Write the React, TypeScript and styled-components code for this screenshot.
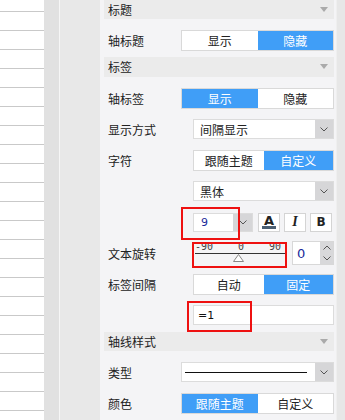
import React from "react";
import styled, { createGlobalStyle } from "styled-components";

const GlobalStyle = createGlobalStyle`
  html, body {
    margin: 0;
    padding: 0;
    background: #f4f4f6;
  }
  body {
    font-family: "Noto Sans CJK SC", "Noto Sans", sans-serif;
    font-size: 12px;
    color: #222;
  }
`;

const Page = styled.div`
  display: flex;
  width: 345px;
  height: 420px;
  overflow: hidden;
`;

const ListColumn = styled.div`
  width: 44px;
  flex: none;
  background: repeating-linear-gradient(
    to bottom,
    #fff 0 11px,
    #c9c9c9 11px 12px,
    #fff 12px 19px
  );
`;

const Gutter = styled.div`
  width: 15px;
  flex: none;
  background: #e1e1e1;
  border-right: 1px solid #f6f6f6;
`;

const Spacer = styled.div`
  width: 40px;
  flex: none;
  background: #e8e8e8;
`;

const Panel = styled.div`
  flex: 1;
  background: #f4f4f6;
  padding: 0 2px 0 4px;
  display: flex;
  flex-direction: column;
`;

const ScrollTrack = styled.div`
  width: 8px;
  flex: none;
  background: #e7e7e7;
  border-left: 1px solid #efefef;
`;

const Header = styled.div`
  height: 23px;
  background: #ebebeb;
  display: flex;
  align-items: center;
  justify-content: space-between;
  padding: 0 6px 0 4px;
  font-size: 12px;
  color: #222;
`;

const Body = styled.div`
  display: flex;
  flex-direction: column;
  gap: 10px;
  padding: 11px 0 6px 4px;
`;

const Row = styled.div`
  display: flex;
  align-items: center;
  height: 21px;
`;

const Label = styled.div<{ $w: number }>`
  width: ${(p) => p.$w}px;
  flex: none;
  white-space: nowrap;
`;

const Toggle = styled.div`
  flex: 1;
  display: flex;
  height: 21px;
  box-sizing: border-box;
  border: 1px solid #d9d9d9;
  background: #fff;
`;

const ToggleItem = styled.div<{ $on?: boolean }>`
  flex: 1;
  display: flex;
  align-items: center;
  justify-content: center;
  background: ${(p) => (p.$on ? "#409ef7" : "#fff")};
  color: ${(p) => (p.$on ? "#fff" : "#222")};
  font-size: 12px;
`;

const Select = styled.div`
  flex: 1;
  display: flex;
  height: 20px;
  box-sizing: border-box;
  border: 1px solid #dcdcdc;
  background: #fff;
`;

const SelectValue = styled.div`
  flex: 1;
  display: flex;
  align-items: center;
  padding-left: 6px;
`;

const LineSample = styled.div`
  flex: 1;
  height: 1px;
  background: #111;
  margin: 0 8px 0 3px;
  align-self: center;
`;

const DropButton = styled.div<{ $w?: number }>`
  width: ${(p) => p.$w ?? 18}px;
  flex: none;
  background: #d6d6d8;
  display: flex;
  align-items: center;
  justify-content: center;
`;

const Annotated = styled.div`
  position: relative;
  display: flex;
`;

const RedBox = styled.div`
  position: absolute;
  border: 2px solid #ee1111;
  pointer-events: none;
`;

const SizeInput = styled.div`
  width: 60px;
  height: 19px;
  display: flex;
  box-sizing: border-box;
  border: 1px solid #dcdcdc;
  background: #fff;
`;

const SizeValue = styled.div`
  flex: 1;
  display: flex;
  align-items: center;
  padding-left: 7px;
  color: #1a2a9a;
  font-family: "DejaVu Sans", sans-serif;
  font-size: 11px;
`;

const StyleButtons = styled.div`
  display: flex;
  gap: 4px;
  margin-left: 5px;
`;

const StyleButton = styled.div`
  width: 22px;
  height: 19px;
  box-sizing: border-box;
  border: 1px solid #d4d4d4;
  background: #fff;
  display: flex;
  flex-direction: column;
  align-items: center;
  justify-content: center;
  font-family: "DejaVu Sans", sans-serif;
  font-size: 12px;
  font-weight: bold;
  color: #222;
`;

const BigA = styled.span`
  line-height: 11px;
  font-size: 13px;
`;

const ColorBar = styled.div`
  width: 14px;
  height: 3px;
  background: #4a5e72;
`;

const ItalicI = styled.span`
  font-family: "Liberation Serif", serif;
  font-style: italic;
  font-size: 14px;
`;

const Slider = styled.div`
  width: 94px;
  height: 24px;
  display: flex;
  flex-direction: column;
`;

const Ticks = styled.div`
  display: flex;
  justify-content: space-between;
  height: 12px;
  padding: 1px 5px 0 3px;
  box-sizing: border-box;
  font-family: "DejaVu Sans Mono", monospace;
  font-size: 10px;
  line-height: 10px;
  color: #444;
`;

const Track = styled.div`
  height: 1px;
  background: #333;
  margin-left: 3px;
`;

const ThumbRow = styled.div`
  display: flex;
  justify-content: center;
  padding-right: 2px;
`;

const Spinner = styled.div`
  width: 42px;
  height: 24px;
  margin-left: 6px;
  display: flex;
  box-sizing: border-box;
  border: 1px solid #d8d8d8;
  background: #fff;
`;

const SpinValue = styled.div`
  flex: 1;
  display: flex;
  align-items: center;
  padding-left: 4px;
  color: #1a2a9a;
  font-family: "DejaVu Sans", sans-serif;
  font-size: 13px;
`;

const SpinArrows = styled.div`
  width: 13px;
  background: #d8d8da;
  display: flex;
  flex-direction: column;
  align-items: center;
  justify-content: space-around;
`;

const TextInput = styled.div`
  flex: 1;
  height: 20px;
  box-sizing: border-box;
  border: 1px solid #dcdcdc;
  background: #fff;
  display: flex;
  align-items: center;
  padding-left: 4px;
  font-family: "DejaVu Sans", sans-serif;
  font-size: 11px;
  color: #111;
`;

const Caret = () => (
  <svg width="8" height="5" viewBox="0 0 8 5">
    <path d="M0 0 L8 0 L4 5 Z" fill="#aaaaaa" />
  </svg>
);

const Chevron = ({ up }: { up?: boolean }) => (
  <svg width="8" height="5" viewBox="0 0 8 5">
    <path
      d={up ? "M0.5 4.5 L4 1 L7.5 4.5" : "M0.5 0.5 L4 4 L7.5 0.5"}
      fill="none"
      stroke="#555"
      strokeWidth="1"
    />
  </svg>
);

const Thumb = () => (
  <svg width="11" height="8" viewBox="0 0 11 8">
    <path d="M5.5 0.5 L10.5 7.5 L0.5 7.5 Z" fill="#fff" stroke="#888" strokeWidth="1" />
  </svg>
);

const SectionHeader = ({ title }: { title: string }) => (
  <Header>
    <span>{title}</span>
    <Caret />
  </Header>
);

const Switch = ({ items, active }: { items: string[]; active: number }) => (
  <Toggle>
    {items.map((t, i) => (
      <ToggleItem key={t} $on={i === active}>
        {t}
      </ToggleItem>
    ))}
  </Toggle>
);

export default function App() {
  return (
    <>
      <GlobalStyle />
      <Page>
        <ListColumn />
        <Gutter />
        <Spacer />
        <Panel>
          <SectionHeader title="标题" />
          <Body>
            <Row>
              <Label $w={73}>轴标题</Label>
              <Switch items={["显示", "隐藏"]} active={1} />
            </Row>
          </Body>

          <SectionHeader title="标签" />
          <Body>
            <Row>
              <Label $w={73}>轴标签</Label>
              <Switch items={["显示", "隐藏"]} active={0} />
            </Row>
            <Row>
              <Label $w={85}>显示方式</Label>
              <Select>
                <SelectValue>间隔显示</SelectValue>
                <DropButton>
                  <Chevron />
                </DropButton>
              </Select>
            </Row>
            <Row>
              <Label $w={85}>字符</Label>
              <Switch items={["跟随主题", "自定义"]} active={1} />
            </Row>
            <Row>
              <Label $w={85} />
              <Select>
                <SelectValue>黑体</SelectValue>
                <DropButton>
                  <Chevron />
                </DropButton>
              </Select>
            </Row>
            <Row>
              <Label $w={85} />
              <Annotated>
                <SizeInput>
                  <SizeValue>9</SizeValue>
                  <DropButton $w={19}>
                    <Chevron />
                  </DropButton>
                </SizeInput>
                <RedBox style={{ left: -12, top: -6, width: 55, height: 29 }} />
              </Annotated>
              <StyleButtons>
                <StyleButton>
                  <BigA>A</BigA>
                  <ColorBar />
                </StyleButton>
                <StyleButton>
                  <ItalicI>I</ItalicI>
                </StyleButton>
                <StyleButton>B</StyleButton>
              </StyleButtons>
            </Row>
            <Row>
              <Label $w={84}>文本旋转</Label>
              <Annotated>
                <Slider>
                  <Ticks>
                    <span>-90</span>
                    <span>0</span>
                    <span>90</span>
                  </Ticks>
                  <Track />
                  <ThumbRow>
                    <Thumb />
                  </ThumbRow>
                </Slider>
                <RedBox style={{ left: 0, top: 1, width: 91, height: 22 }} />
              </Annotated>
              <Spinner>
                <SpinValue>0</SpinValue>
                <SpinArrows>
                  <Chevron up />
                  <Chevron />
                </SpinArrows>
              </Spinner>
            </Row>
            <Row>
              <Label $w={85}>标签间隔</Label>
              <Switch items={["自动", "固定"]} active={1} />
            </Row>
            <Row>
              <Label $w={85} />
              <Annotated style={{ flex: 1 }}>
                <TextInput>=1</TextInput>
                <RedBox style={{ left: -6, top: -4, width: 61, height: 27 }} />
              </Annotated>
            </Row>
          </Body>

          <SectionHeader title="轴线样式" />
          <Body>
            <Row>
              <Label $w={73}>类型</Label>
              <Select>
                <LineSample />
                <DropButton>
                  <Chevron />
                </DropButton>
              </Select>
            </Row>
            <Row>
              <Label $w={73}>颜色</Label>
              <Switch items={["跟随主题", "自定义"]} active={0} />
            </Row>
          </Body>
        </Panel>
        <ScrollTrack />
      </Page>
    </>
  );
}
